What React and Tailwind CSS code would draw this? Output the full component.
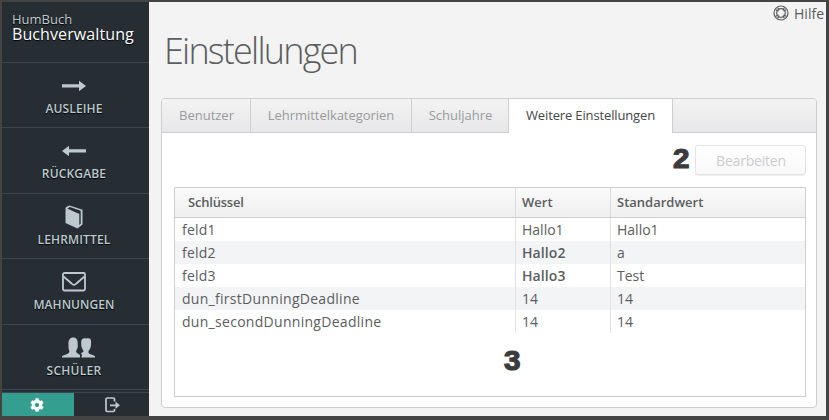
import React from 'react';
import { FaCog } from 'react-icons/fa';

const ArrowRight = () => (
  <svg width="24" height="12" viewBox="0 0 24 12" fill="currentColor"><path d="M0 4.200h17V.8l7 5.200-7 5.200V7.500H0z" /></svg>
);
const ArrowLeft = () => (
  <svg width="24" height="12" viewBox="0 0 24 12" fill="currentColor"><path d="M24 4.200H7V.8L0 6l7 5.200V7.500h17z" /></svg>
);
const Book = () => (
  <svg width="18" height="24" viewBox="0 0 18 24">
    <path d="M.5 3.500Q.5 2.300 1.600 1.800L4.500.5 17.500 4.700v14.800L12.500 23.500.5 18z" fill="currentColor" />
    <path d="M2.300 3.400 4.900 2 15.700 5.800v13l-1.400 1.300V8.700L11.900 8z" fill="#262e33" />
  </svg>
);
const Mail = () => (
  <svg width="24" height="20" viewBox="0 0 24 20" fill="none" stroke="currentColor" strokeWidth="1.800" strokeLinejoin="round">
    <rect x="1" y="1" width="22" height="17.500" rx="1.500" />
    <path d="M1.500 4.500C5 7.500 7.500 9.500 9.500 11.500c1.800 1.900 3.200 1.900 5 0 2-2 4.500-4 8-7" />
  </svg>
);
const People = () => (
  <svg width="33" height="21" viewBox="0 0 33 21" fill="currentColor">
    <path d="M0 20.500v-1.300c2-1.400 5-1.800 6.500-3 .8-.7 1.200-1.700.7-2.700C6.500 12 6.500 10 6.500 8 6.200 3 7.800.5 11.200.5S16 3 15.700 8c.3 1.700-.1 3.500-1.200 5-.5 1-.6 2 .2 2.700L18 18v2.500z" />
    <path d="M19.300 20.500c1.100-2 .6-3.500-.6-4.400 1.500-.5 2.800-1 2.900-2.200-1.700-2-2.700-4.600-2.400-8.400C19.200 2 20.900.6 24.200 1.500 27.700.4 29.400 1.800 29.100 5.500c.2 3.800-.8 6.500-2.600 8.600-.2 1.300.1 2.300 1.400 3 1.700.8 4.100 1.100 5.100 2.200v1.200z" />
  </svg>
);
const Exit = () => (
  <svg width="15" height="16" viewBox="0 0 15 16" fill="none" stroke="currentColor" strokeWidth="1.700">
    <path d="M9.500 4.500V2.200Q9.500 1 8.300 1H2.200Q1 1 1 2.200v11.100q0 1.200 1.200 1.200h6.100q1.200 0 1.200-1.200V12M5 8.300h7" />
    <path d="m10.500 4.600 4.400 3.700-4.400 3.700z" fill="currentColor" stroke="none" />
  </svg>
);
const Ring = () => (
  <svg width="16" height="16" viewBox="0 0 16 16" fill="none" stroke="#5b5d60">
    <circle cx="8" cy="8" r="7" strokeWidth="1.200" />
    <circle cx="8" cy="8" r="4.300" strokeWidth="1.200" />
    <path d="m2.900 4.700 2.500 1.500M4.700 2.900l1.500 2.500M13.100 4.700l-2.500 1.500M11.300 2.900 9.800 5.400M2.900 11.300l2.500-1.500M4.700 13.100l1.500-2.500M13.100 11.300l-2.500-1.500M11.300 13.100l-1.500-2.500" strokeWidth="1.100" />
  </svg>
);

const nav = [
  ['AUSLEIHE', ArrowRight, 'h-[65px]', 'pt-[10px]', 'tracking-[0.15px]'],
  ['RÜCKGABE', ArrowLeft, 'h-[66px]', 'pt-[10px]', 'tracking-[0.15px]'],
  ['LEHRMITTEL', Book, 'h-[65px]', 'pt-[10px]', 'tracking-[0.15px]'],
  ['MAHNUNGEN', Mail, 'h-[66px]', 'pt-[10px]', 'tracking-[0.05px]'],
  ['SCHÜLER', People, 'h-[65px]', 'pt-[9px]', 'tracking-[0.25px]'],
];

const tabs = [
  ['Benutzer', 'w-[89px]'],
  ['Lehrmittelkategorien', 'w-[161px]'],
  ['Schuljahre', 'w-[97px]'],
];

const rows = [
  ['feld1', 'Hallo1', 'Hallo1'],
  ['feld2', 'Hallo2', 'a', true],
  ['feld3', 'Hallo3', 'Test', true],
  ['dun_firstDunningDeadline', '14', '14'],
  ['dun_secondDunningDeadline', '14', '14'],
];

function Sidebar() {
  return (
    <aside className="flex w-[147px] shrink-0 flex-col bg-[#262e33] text-[#bdc9cf]">
      <div className="h-[61px] border-b border-[#3c464c] pl-[10px] pt-[10px] [text-shadow:0_1px_1px_#000]">
        <div className="text-[13px] leading-[15px] text-[#c3cacd]">HumBuch</div>
        <div className="text-[16px] leading-[15px] tracking-[0.1px] text-white">Buchverwaltung</div>
      </div>
      {nav.map(([label, Icon, height, top, tracking]) => (
        <div key={label} className={`flex shrink-0 flex-col items-center border-b border-[#3c464c] pr-[3px] ${top} ${height}`}>
          <div className={`flex h-[26px] items-center justify-center ${label === 'SCHÜLER' ? 'pl-[8px]' : ''}`}><Icon /></div>
          <div className={`mt-px text-[12px] font-semibold leading-[17px] [text-shadow:0_1px_1px_#000] ${top === 'pt-[9px]' ? 'pt-px' : ''} ${tracking}`}>{label}</div>
        </div>
      ))}
      <div className="mt-[2px] flex h-[24px] border-t border-[#3c464c]">
        <div className="flex w-[72px] items-center justify-center bg-[#349e90] pr-[2px] text-white"><FaCog size={14} /></div>
        <div className="flex flex-1 items-center justify-center pl-[2px] pt-px"><Exit /></div>
      </div>
    </aside>
  );
}

function Marker({ children }) {
  return (
    <span className="inline-block origin-left scale-x-[1.06] font-['Liberation_Sans',Arial,sans-serif] text-[28px] font-bold leading-[28px] text-[#3c3c3e] [-webkit-text-stroke:1.2px_#3c3c3e]">{children}</span>
  );
}

function Table() {
  return (
    <div className="h-[210px] w-[632px] border border-[#cdcecf] bg-white text-[#5b5d60]">
      <div className="flex h-[30px] border-b border-[#cdcecf] bg-gradient-to-b from-[#fafafa] to-[#efefef] text-[13px] font-semibold leading-[29px]">
        <div className="w-[340px] pl-[13px] tracking-[-0.2px]">Schlüssel</div>
        <div className="w-[95px] border-l border-[#dadde0] pl-[6px]">Wert</div>
        <div className="flex-1 border-l border-[#dadde0] pl-[6px]">Standardwert</div>
      </div>
      {rows.map(([key, value, standard, bold]) => (
        <div key={key} className="flex h-[23px] text-[14px] leading-[24px] odd:bg-[#f3f4f6] even:bg-white">
          <div className={`w-[340px] pl-[7px] ${key.startsWith('dun') ? 'tracking-[0.29px]' : 'tracking-[0.2px]'}`}>{key}</div>
          <div className={`w-[95px] border-l border-[#dfe1e3] pl-[6px] ${bold ? 'font-semibold tracking-[0.1px]' : ''}`}>{value}</div>
          <div className="flex-1 border-l border-[#dfe1e3] pl-[6px]">{standard}</div>
        </div>
      ))}
      <div className="pl-[329px] pt-[14px]"><Marker>3</Marker></div>
    </div>
  );
}

export default function App() {
  return (
    <div className="flex h-[420px] w-[829px] overflow-hidden border-b-4 border-l-2 border-r-[3px] border-t-2 border-[#454445] bg-[#f3f3f3] font-['Open_Sans',sans-serif]">
      <Sidebar />
      <main className="min-w-0 flex-1 pl-[12px]">
        <div className="flex h-[96px] justify-between">
          <h1 className="pl-[3px] pt-[25px] text-[36px] font-light leading-[48px] tracking-[-1.800px] text-[#5b5d60]">Einstellungen</h1>
          <div className="flex h-[22px] items-center gap-[5px] pr-[2px] text-[14px] text-[#5b5d60]"><Ring /><span>Hilfe</span></div>
        </div>
        <section className="h-[310px] w-[656px] overflow-hidden rounded border border-[#cdcecf] bg-white">
          <div className="flex h-[34px] text-[13px] leading-[33px] text-[#999b9c]">
            {tabs.map(([label, width]) => (
              <div key={label} className={`border-b border-r border-[#cdcecf] bg-gradient-to-b from-[#f3f3f3] to-[#e7e7e9] text-center ${label === 'Lehrmittelkategorien' ? 'tracking-[-0.05px]' : 'pl-px'} ${width}`}>{label}</div>
            ))}
            <div className="w-[163px] text-center tracking-[-0.14px] text-[#464749]">Weitere Einstellungen</div>
            <div className="flex-1 border-b border-l border-[#cdcecf] bg-gradient-to-b from-[#f3f3f3] to-[#e7e7e9]" />
          </div>
          <div className="flex h-[54px] items-start justify-end pr-[10px] pt-[12px]">
            <span className="mr-[6px]"><Marker>2</Marker></span>
            <button className="h-[30px] w-[111px] rounded-[3px] border border-[#e4e4e5] bg-gradient-to-b from-white to-[#f8f8f8] pl-px text-[14px] tracking-[-0.2px] text-[#cbccce] shadow-[0_1px_1px_#eeeeee]">Bearbeiten</button>
          </div>
          <div className="pl-[12px]"><Table /></div>
        </section>
      </main>
    </div>
  );
}
